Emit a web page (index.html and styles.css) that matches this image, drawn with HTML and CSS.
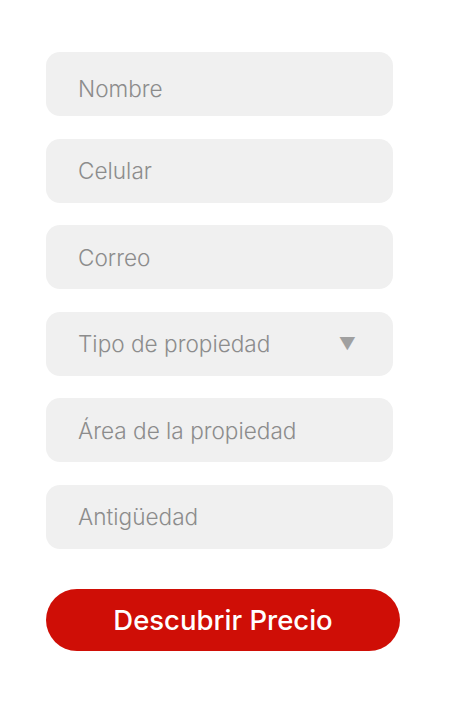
FILE: index.html
```html
<!DOCTYPE html>
<html lang="es">
<head>
    <meta charset="UTF-8">
    <meta name="viewport" content="width=device-width, initial-scale=1.0">
    <title>Descubrir Precio</title>
    <link rel="stylesheet" href="styles.css">
</head>
<body>
    <form class="quote-form">
        <input class="field field-first" type="text" placeholder="Nombre">
        <input class="field" type="tel" placeholder="Celular">
        <input class="field" type="email" placeholder="Correo">
        <div class="select-wrap">
            <select class="field field-select">
                <option value="" selected disabled>Tipo de propiedad</option>
                <option>Casa</option>
                <option>Departamento</option>
                <option>Terreno</option>
            </select>
            <span class="select-arrow">&#9660;</span>
        </div>
        <input class="field" type="text" placeholder="Área de la propiedad">
        <input class="field" type="text" placeholder="Antigüedad">
        <button class="submit" type="button">Descubrir Precio</button>
    </form>
</body>
</html>
```

FILE: styles.css
```css
body {
    margin: 0;
    padding: 0;
    background-color: #ffffff;
    font-family: Inter, "Noto Sans", sans-serif;
}

.quote-form {
    display: flex;
    flex-direction: column;
    gap: 22.6px;
    padding: 52px 0 0 46px;
    width: 354px;
}

.field {
    box-sizing: border-box;
    width: 347px;
    height: 64px;
    padding: 0 32px;
    border: none;
    border-radius: 14px;
    background-color: #f0f0f0;
    font-family: "Inter Light", Inter, "Noto Sans", sans-serif;
    font-size: 22.6px;
    font-weight: 300;
    color: #8c8c8c;
    outline: none;
}

.field::placeholder {
    color: #8c8c8c;
}

.field-first {
    padding-top: 8px;
}

.select-wrap {
    position: relative;
    width: 347px;
}

.field-select {
    appearance: none;
    -webkit-appearance: none;
    cursor: pointer;
}

.select-arrow {
    position: absolute;
    right: 37px;
    top: 50%;
    transform: translateY(-50%);
    font-size: 17px;
    color: #a0a0a0;
    pointer-events: none;
}

.submit {
    margin-top: 17px;
    width: 354px;
    height: 62px;
    border: none;
    border-radius: 31px;
    background-color: #cf0e06;
    color: #ffffff;
    font-family: Inter, "Noto Sans", sans-serif;
    font-size: 27.5px;
    font-weight: 500;
    cursor: pointer;
}
```
